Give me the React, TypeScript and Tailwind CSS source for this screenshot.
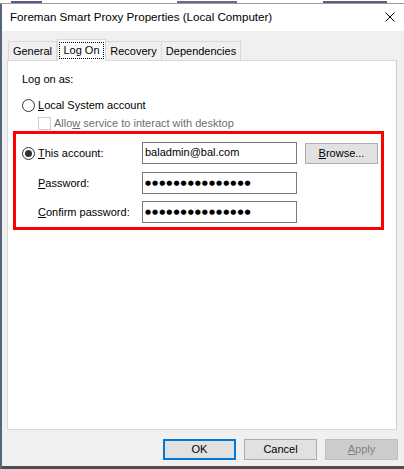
const body = "font-['Liberation_Sans',Arial,sans-serif] text-[11px] leading-[13px] text-black";

function Radio({ checked }: { checked?: boolean }) {
	return (
		<div className="flex h-[13px] w-[13px] shrink-0 items-center justify-center rounded-full border border-[#333333] bg-white">
			{checked && <div className="h-[7px] w-[7px] rounded-full bg-[#333333]" />}
		</div>
	);
}

function Field({ children }: { children: React.ReactNode }) {
	return (
		<div className="flex h-[22px] w-[155px] items-center border border-[#7a7a7a] bg-white pl-[2px] pb-[1px]">
			{children}
		</div>
	);
}

function Dots() {
	return (
		<span className="font-['DejaVu_Sans',sans-serif] text-[7px] leading-[8px] tracking-[1px]">
			●●●●●●●●●●●●●●●
		</span>
	);
}

function DlgButton({
	children,
	primary,
	disabled,
}: {
	children: React.ReactNode;
	primary?: boolean;
	disabled?: boolean;
}) {
	const tone = primary
		? "border-2 border-[#0078d7] bg-[#e1e1e1] text-black"
		: disabled
			? "border border-[#bfbfbf] bg-[#cccccc] text-[#838383]"
			: "border border-[#adadad] bg-[#e1e1e1] text-black";
	return (
		<div className={`flex h-[21px] w-[73px] items-center justify-center ${tone}`}>
			{children}
		</div>
	);
}

function Tab({
	label,
	width,
	selected,
	first,
}: {
	label: React.ReactNode;
	width: string;
	selected?: boolean;
	first?: boolean;
}) {
	if (selected) {
		return (
			<div
				className={`relative z-10 -mb-px flex h-[22px] items-start justify-center border border-b-0 border-[#d9d9d9] bg-white pt-[2px] ${width}`}
			>
				<div className="flex h-[17px] w-[45px] items-center justify-center border border-dotted border-black">
					{label}
				</div>
			</div>
		);
	}
	return (
		<div
			className={`flex h-[19px] items-center justify-center border border-b-0 border-[#d9d9d9] bg-[#f0f0f0] pt-[1px] ${first ? "" : "border-l-0"} ${width}`}
		>
			{label}
		</div>
	);
}

export default function App() {
	return (
		<div className={`flex h-[469px] w-[404px] flex-col overflow-hidden bg-[#4d4d4d] ${body}`}>
			{/* window behind, only the lower edge of its row shows */}
			<div className="flex h-[4px] shrink-0 items-start gap-0 border-b border-[#9a9a9a] bg-white pt-[1px]">
				<div className="ml-[11px] h-[2px] w-[31px] bg-[#5a5a8a]" />
				<div className="ml-[135px] h-[2px] w-[60px] bg-[#6a6a8a]" />
				<div className="ml-[86px] h-[2px] w-[64px] bg-[#6a5a7a]" />
			</div>
			<div className="flex min-h-0 flex-1">
				<div className="w-[2px] shrink-0 bg-[#56657a]" />
				<div className="flex min-w-0 flex-1 flex-col">
					{/* title bar */}
					<div className="flex h-[27px] shrink-0 items-center justify-between bg-white pl-[8px] pr-[9px] pb-[2px]">
						<span className="font-['Liberation_Sans',Arial,sans-serif] text-[11.6px]">
							Foreman Smart Proxy Properties (Local Computer)
						</span>
						<svg width="10" height="10" viewBox="0 0 10 10" className="mt-[1px]">
							<path d="M0.5 0.5 L9.5 9.5 M9.5 0.5 L0.5 9.5" stroke="#000" strokeWidth="1" fill="none" />
						</svg>
					</div>

					<div className="flex flex-1 flex-col bg-[#f0f0f0]">
						{/* tabs */}
						<div className="ml-[6px] mt-[8px] flex items-end">
							<Tab first label="General" width="w-[49px]" />
							<Tab selected label="Log On" width="w-[49px]" />
							<Tab label="Recovery" width="w-[56px]" />
							<Tab label="Dependencies" width="w-[79px]" />
						</div>

						{/* tab page */}
						<div className="relative ml-[5px] h-[370px] w-[390px] border border-[#d9d9d9] border-r-[#cccccc] bg-white pl-[14px] pt-[11px]">
							<div className="flex h-[14px] items-center">Log on as:</div>

							<div className="mt-[12px] flex h-[14px] items-center gap-[3px]">
								<Radio />
								<span>
									<u className="underline-offset-1">L</u>ocal System account
								</span>
							</div>

							<div className="mt-[4px] flex h-[14px] items-center gap-[3px] pl-[16px] text-[#6d6d6d]">
								<div className="h-[13px] w-[13px] border border-[#cccccc] bg-white" />
								<span>
									Allo<u className="underline-offset-1">w</u> service to interact with desktop
								</span>
							</div>

							<div className="mt-[12px] flex h-[22px] items-center">
								<div className="w-[16px]">
									<Radio checked />
								</div>
								<span className="w-[104px]">
									<u className="underline-offset-1">T</u>his account:
								</span>
								<Field>baladmin@bal.com</Field>
								<div className="ml-[8px] mt-[1px]">
									<DlgButton>
										<span>
											<u className="underline-offset-1">B</u>rowse...
										</span>
									</DlgButton>
								</div>
							</div>

							<div className="mt-[8px] flex h-[22px] items-center pl-[16px]">
								<span className="w-[104px]">
									<u className="underline-offset-1">P</u>assword:
								</span>
								<Field>
									<Dots />
								</Field>
							</div>

							<div className="mt-[7px] flex h-[22px] items-center pl-[16px]">
								<span className="w-[104px]">
									<u className="underline-offset-1">C</u>onfirm password:
								</span>
								<Field>
									<Dots />
								</Field>
							</div>

							{/* annotation */}
							<div className="absolute left-[5px] top-[70px] h-[99px] w-[371px] border-[3px] border-[#ff0000]" />
						</div>

						{/* buttons */}
						<div className="mt-[9px] flex justify-end gap-[8px] pr-[6px]">
							<DlgButton primary>OK</DlgButton>
							<DlgButton>Cancel</DlgButton>
							<DlgButton disabled>
								<span>
									<u className="underline-offset-1">A</u>pply
								</span>
							</DlgButton>
						</div>
					</div>
					<div className="h-[3px] shrink-0 bg-[#4d4d4d]" />
				</div>
			</div>
		</div>
	);
}
